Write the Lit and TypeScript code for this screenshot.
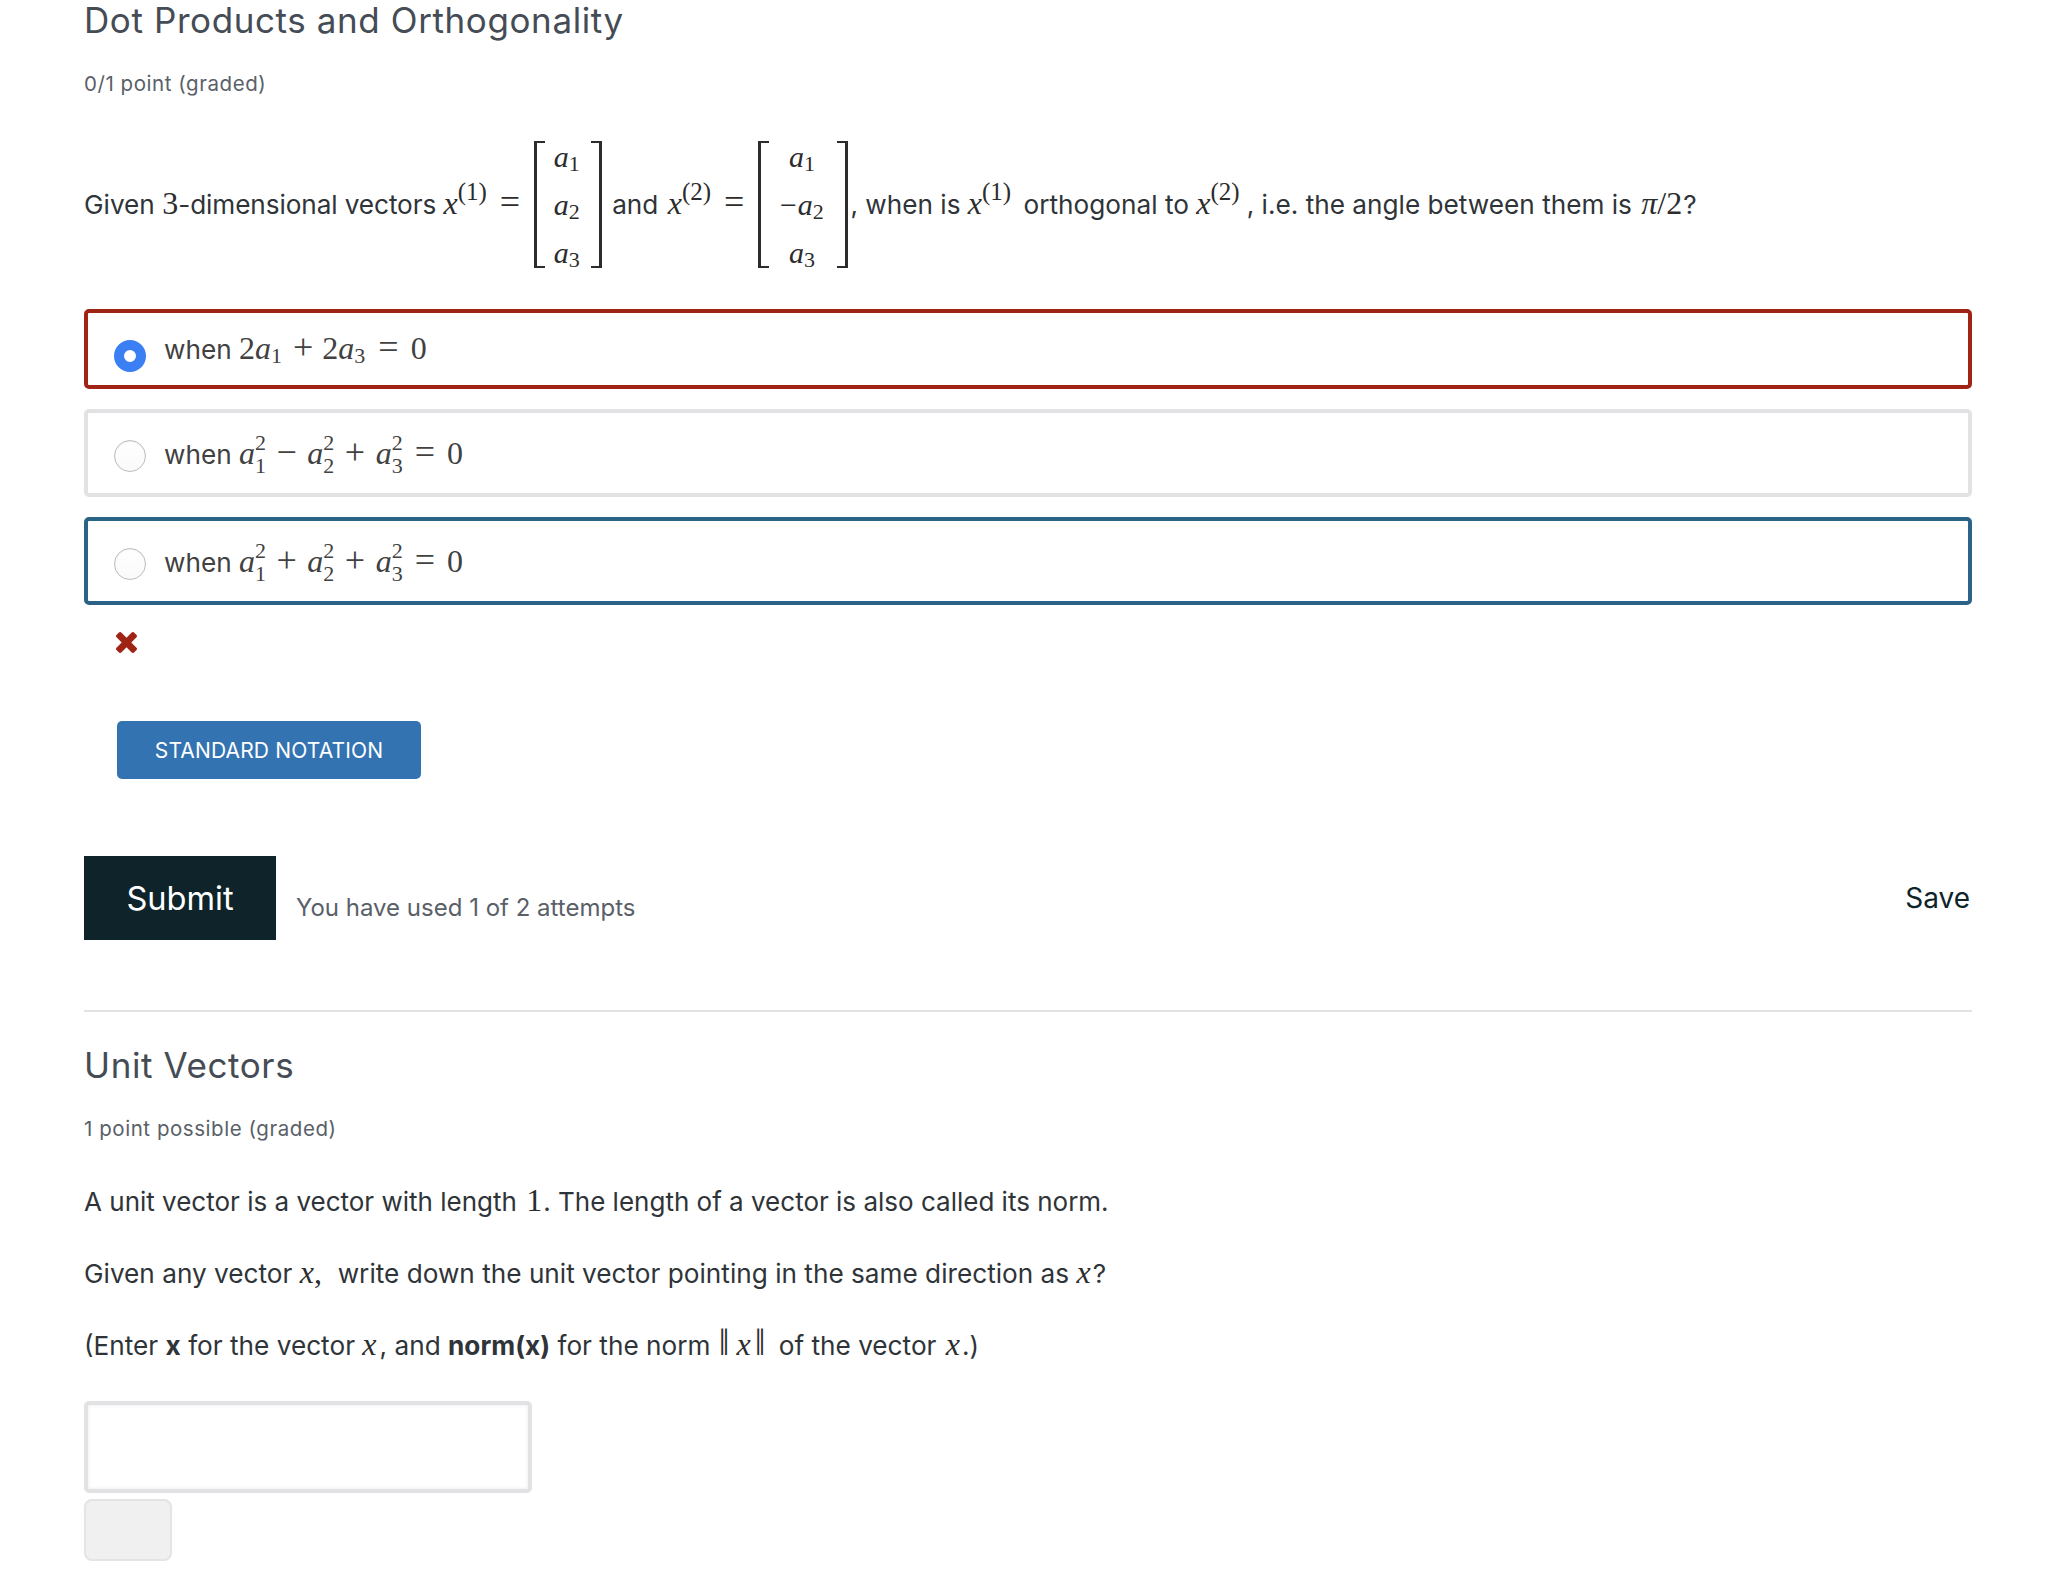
import { LitElement, html, css } from "lit";
import { customElement } from "lit/decorators.js";

const a = (i: string) => html`<i>a</i><span class="sub">${i}</span>`;
const a2 = (i: string) => html`<i>a</i><span class="sup">2</span><span class="sub stack">${i}</span>`;

@customElement("app-root")
export class AppRoot extends LitElement {
  static styles = css`
    :host { display: block; background: #fff; min-height: 1580px; font-family: Inter, "Liberation Sans", sans-serif; color: #2f3439; }
    .page { width: 1888px; margin-left: 84px; box-sizing: border-box; }
    h2 { margin: 0; font-size: 35px; font-weight: 400; line-height: 40px; color: #454c55; letter-spacing: .6px; }
    .meta { font-size: 20.5px; line-height: 28px; color: #5a6068; letter-spacing: .55px; }
    .m1 { margin-top: 30px; }
    p { margin: 0; font-size: 26.2px; line-height: 36px; white-space: pre; }
    .q { margin-top: 42px; height: 126px; display: block; }
    .tight { letter-spacing: -.1px; }
    m { font-family: "Liberation Serif", serif; font-size: 32px; color: #2c2c2c; }
    m i, i { font-family: "Liberation Serif", serif; font-style: italic; }
    .sup1 { font-family: "Liberation Serif", serif; font-size: 25px; vertical-align: 14px; line-height: 0; }
    .eq { margin: 0 14px 0 13px; font-size: 36px; line-height: 0; }
    .after-math { margin-left: 2px; }
    .before-math { margin-right: 3px; }
    .and { margin: 0 2px 0 10px; }
    .gap-m { margin-left: 2px; }
    .gap-s { margin-left: 4px; }
    .matrix { display: inline-flex; vertical-align: -54px; align-items: flex-start; height: 126px; font-family: "Liberation Serif", serif; font-size: 30px; color: #2c2c2c; }
    .br { box-sizing: border-box; width: 11px; height: 127px; margin-top: 1px; border: solid #2c2c2c; border-width: 2px 0; flex: none; }
    .br.l { border-left: 3px solid #2c2c2c; }
    .br.r { border-right: 3px solid #2c2c2c; }
    .cells { box-sizing: border-box; width: 46px; padding-right: 3px; display: flex; flex-direction: column; align-items: center; margin-top: -7px; line-height: 48px; flex: none; }
    .cells.wide { width: 68px; }
    .minus { margin-right: 1px; }
    .sub { font-size: 22px; vertical-align: -4px; line-height: 0; }
    .options { display: flex; flex-direction: column; gap: 20px; margin-top: 43px; }
    .opt { box-sizing: border-box; height: 88px; border: 4px solid #e2e2e4; border-radius: 5px; padding-left: 26px; display: flex; align-items: center; color: #414141; }
    .opt.red { height: 80px; border-color: #9f2416; }
    .opt.blue { border-color: #2a6385; }
    .radio { width: 32px; height: 32px; border-radius: 50%; box-sizing: border-box; border: 1px solid #bdbdbd; background: linear-gradient(#fff, #fafafa); flex: none; margin-top: 6px; box-shadow: inset 0 1px 2px rgba(0,0,0,.06); }
    .red .radio { margin-top: 14px; border: 10px solid #3b7ff5; background: #fff; box-shadow: none; }
    .txt { margin-left: 18px; font-size: 26.2px; line-height: 40px; white-space: pre; margin-top: 2px; }
    .red .txt { margin-top: 0; }
    .txt m { color: #414141; font-size: 32px; }
    .txt .sup { font-size: 22px; vertical-align: 14px; line-height: 0; }
    .txt .sub { font-size: 22px; vertical-align: -9px; }
    .red .txt .sub { vertical-align: -4px; }
    .txt .stack { margin-left: -11px; }
    .op { margin: 0 10.5px; font-size: 36px; line-height: 0; }
    .op.e { margin: 0 12px; }
    .red .op { margin: 0 9px 0 11px; }
    .red .op.e { margin: 0 12px 0 13px; }
    .x { display: block; margin: 27px 0 0 32px; width: 21px; height: 21px; fill: #9f2416; }
    .std { display: block; box-sizing: border-box; margin: 68px 0 0 33px; width: 304px; height: 58px; background: #3373b1; border-radius: 5px; border: 0; color: #fff; font: 400 21px Inter, sans-serif; letter-spacing: .15px; padding: 0; }
    .actions { display: flex; align-items: flex-start; margin-top: 77px; }
    .submit { width: 192px; height: 84px; background: #0e242a; color: #fff; border: 0; padding: 0; font: 400 32.6px Inter, sans-serif; flex: none; }
    .used { margin: 30px 0 0 20px; font-size: 24px; line-height: 44px; color: #5a6068; }
    .save { margin: 22px 2px 0 auto; font-size: 28px; line-height: 40px; color: #0e242a; }
    hr { border: 0; height: 2px; background: #e2e2e2; margin: 70px 0 0; }
    .title2 { margin-top: 33px; }
    .m2 { margin-top: 30px; }
    .p1 { margin-top: 39px; font-size: 26px; }
    .p2 { margin-top: 34px; }
    .one { margin: 0 1px 0 2px; }
    .xw { margin-right: 1px; }
    .xq { margin-right: 2px; }
    .norm { margin: 0 6px 0 1px; font-size: 38px; line-height: 0; }
    .norm i { margin: 0 4px 0 7px; font-size: 32px; }
    .xmid { margin-right: 3px; }
    .xend { margin: 0 2px 0 2px; }
    .input { display: block; box-sizing: border-box; width: 448px; height: 92px; margin-top: 37px; border: 4px solid #e2e2e4; border-radius: 5px; background: #fff; box-shadow: inset 0 0 4px rgba(0,0,0,.08); padding: 0; }
    .check { display: block; box-sizing: border-box; width: 88px; height: 62px; margin-top: 6px; background: #f0f0f0; border: 2px solid #e4e4e4; border-radius: 8px; padding: 0; }
  `;

  render() {
    return html`<div class="page">
      <h2>Dot Products and Orthogonality</h2>
      <div class="meta m1">0/1 point (graded)</div>
      <p class="q">Given <m>3</m><span class="tight">-dimensional vectors </span><m><i>x</i><span class="sup1">(1)</span><span class="eq">=</span></m><span class="matrix"><span class="br l"></span><span class="cells"><span>${a("1")}</span><span>${a("2")}</span><span>${a("3")}</span></span><span class="br r"></span></span><span class="and">and </span><m><i>x</i><span class="sup1">(2)</span><span class="eq">=</span></m><span class="matrix"><span class="br l"></span><span class="cells wide"><span>${a("1")}</span><span><span class="minus">−</span>${a("2")}</span><span>${a("3")}</span></span><span class="br r"></span></span><span class="after-math">, when is </span><m class="before-math"><i>x</i><span class="sup1">(1)</span></m><span class="gap-m"> orthogonal to </span><m class="before-math"><i>x</i><span class="sup1">(2)</span></m><span class="gap-s">, i.e. the angle between them is </span><m class="one"><i>π</i>/2</m>?</p>
      <div class="options">
        <div class="opt red"><span class="radio"></span><span class="txt">when <m>2${a("1")}<span class="op">+</span>2${a("3")}<span class="op e">=</span>0</m></span></div>
        <div class="opt"><span class="radio"></span><span class="txt">when <m>${a2("1")}<span class="op">−</span>${a2("2")}<span class="op">+</span>${a2("3")}<span class="op e">=</span>0</m></span></div>
        <div class="opt blue"><span class="radio"></span><span class="txt">when <m>${a2("1")}<span class="op">+</span>${a2("2")}<span class="op">+</span>${a2("3")}<span class="op e">=</span>0</m></span></div>
      </div>
      <svg class="x" viewBox="1.72 5.72 18.56 18.56"><path d="M20.281 20.656c0 .391-.156.781-.438 1.062l-2.125 2.125c-.281.281-.672.438-1.062.438s-.781-.156-1.062-.438L11 19.249l-4.594 4.594c-.281.281-.672.438-1.062.438s-.781-.156-1.062-.438l-2.125-2.125C1.876 21.437 1.72 21.046 1.72 20.656s.156-.781.438-1.062L6.752 15 2.158 10.406c-.281-.281-.438-.672-.438-1.062s.156-.781.438-1.062l2.125-2.125c.281-.281.672-.438 1.062-.438s.781.156 1.062.438L11 10.751l4.594-4.594c.281-.281.672-.438 1.062-.438s.781.156 1.062.438l2.125 2.125c.281.281.438.672.438 1.062s-.156.781-.438 1.062L15.249 15l4.594 4.594c.281.281.438.672.438 1.062z"/></svg>
      <button class="std">STANDARD NOTATION</button>
      <div class="actions">
        <button class="submit">Submit</button>
        <span class="used">You have used 1 of 2 attempts</span>
        <span class="save">Save</span>
      </div>
      <hr />
      <h2 class="title2">Unit Vectors</h2>
      <div class="meta m2">1 point possible (graded)</div>
      <p class="p1">A unit vector is a vector with length <m class="one">1</m>. The length of a vector is also called its norm.</p>
      <p class="p2">Given any vector <m class="xw"><i>x</i>,</m>  write down the unit vector pointing in the same direction as <m class="xq"><i>x</i></m>?</p>
      <p class="p2">(Enter <b>x</b> for the vector <m class="xmid"><i>x</i></m>, and <b>norm(x)</b> for the norm <m class="norm">‖<i>x</i>‖</m> of the vector <m class="xend"><i>x</i></m>.)</p>
      <input class="input" />
      <button class="check"></button>
    </div>`;
  }
}
